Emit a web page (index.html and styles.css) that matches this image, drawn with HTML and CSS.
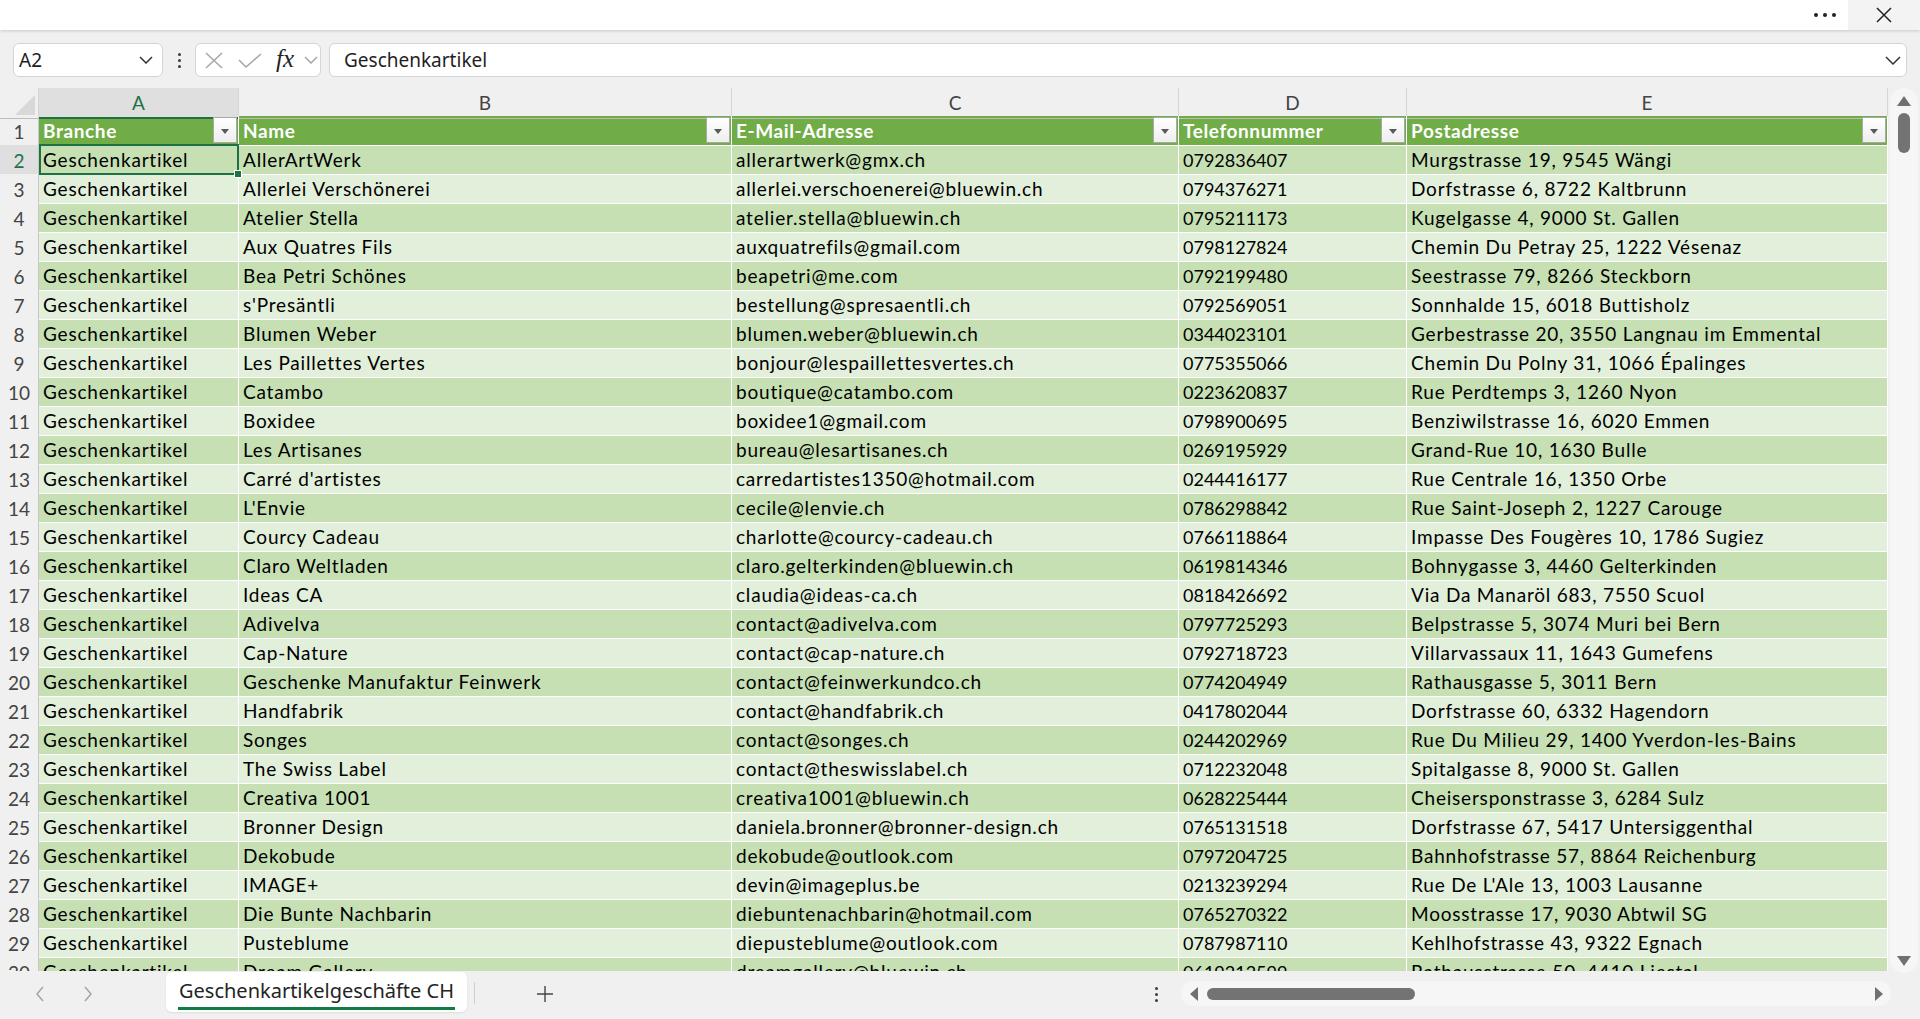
FILE: index.html
```html
<!DOCTYPE html>
<html lang="de">
<head>
<meta charset="utf-8">
<title>Geschenkartikelgeschäfte CH</title>
<link rel="stylesheet" href="styles.css">
</head>
<body>
<div class="app">
  <div class="titlebar">
    <div class="title-more"><span class="dot"></span><span class="dot"></span><span class="dot"></span></div>
    <div class="title-close">
      <svg width="16" height="16" viewBox="0 0 16 16"><path d="M1 1L15 15M15 1L1 15" stroke="#222" stroke-width="1.5" fill="none"/></svg>
    </div>
  </div>

  <div class="formulabar">
    <div class="namebox">
      <span class="nb-text">A2</span>
      <svg class="chev" width="14" height="8" viewBox="0 0 14 8"><path d="M1 1L7 7L13 1" stroke="#333" stroke-width="1.5" fill="none"/></svg>
    </div>
    <div class="fb-dots"><span></span><span></span><span></span></div>
    <div class="fxbox">
      <svg class="fx-x" width="18" height="17" viewBox="0 0 18 17"><path d="M1 1L17 16M17 1L1 16" stroke="#a6a6a6" stroke-width="1.5" fill="none"/></svg>
      <svg class="fx-check" width="24" height="15" viewBox="0 0 24 15"><path d="M1 7L8 14L23 1" stroke="#a6a6a6" stroke-width="1.5" fill="none"/></svg>
      <span class="fx-label">fx</span>
      <svg class="fx-chev" width="14" height="8" viewBox="0 0 14 8"><path d="M1 1L7 7L13 1" stroke="#a6a6a6" stroke-width="1.5" fill="none"/></svg>
    </div>
    <div class="formula">
      <span class="formula-text">Geschenkartikel</span>
      <svg class="chev" width="16" height="9" viewBox="0 0 16 9"><path d="M1 1L8 8L15 1" stroke="#333" stroke-width="1.5" fill="none"/></svg>
    </div>
  </div>

  <div class="main">
    <div class="sheet">
      <div class="colhead">
        <div class="corner"><span class="corner-tri"></span></div>
        <div class="ch sel">A</div>
        <div class="ch">B</div>
        <div class="ch">C</div>
        <div class="ch">D</div>
        <div class="ch">E</div>
      </div>

      <div class="r hd">
        <div class="rh">1</div>
        <div class="c">Branche<span class="fbtn"></span></div>
        <div class="c">Name<span class="fbtn"></span></div>
        <div class="c">E-Mail-Adresse<span class="fbtn"></span></div>
        <div class="c">Telefonnummer<span class="fbtn"></span></div>
        <div class="c">Postadresse<span class="fbtn"></span></div>
      </div>

      <div class="r dk"><div class="rh sel">2</div><div class="c active">Geschenkartikel<span class="selbox"><span class="handle"></span></span></div><div class="c">AllerArtWerk</div><div class="c">allerartwerk@gmx.ch</div><div class="c num">0792836407</div><div class="c">Murgstrasse 19, 9545 Wängi</div></div>
      <div class="r lt"><div class="rh">3</div><div class="c">Geschenkartikel</div><div class="c">Allerlei Verschönerei</div><div class="c">allerlei.verschoenerei@bluewin.ch</div><div class="c num">0794376271</div><div class="c">Dorfstrasse 6, 8722 Kaltbrunn</div></div>
      <div class="r dk"><div class="rh">4</div><div class="c">Geschenkartikel</div><div class="c">Atelier Stella</div><div class="c">atelier.stella@bluewin.ch</div><div class="c num">0795211173</div><div class="c">Kugelgasse 4, 9000 St. Gallen</div></div>
      <div class="r lt"><div class="rh">5</div><div class="c">Geschenkartikel</div><div class="c">Aux Quatres Fils</div><div class="c">auxquatrefils@gmail.com</div><div class="c num">0798127824</div><div class="c">Chemin Du Petray 25, 1222 Vésenaz</div></div>
      <div class="r dk"><div class="rh">6</div><div class="c">Geschenkartikel</div><div class="c">Bea Petri Schönes</div><div class="c">beapetri@me.com</div><div class="c num">0792199480</div><div class="c">Seestrasse 79, 8266 Steckborn</div></div>
      <div class="r lt"><div class="rh">7</div><div class="c">Geschenkartikel</div><div class="c">s'Presäntli</div><div class="c">bestellung@spresaentli.ch</div><div class="c num">0792569051</div><div class="c">Sonnhalde 15, 6018 Buttisholz</div></div>
      <div class="r dk"><div class="rh">8</div><div class="c">Geschenkartikel</div><div class="c">Blumen Weber</div><div class="c">blumen.weber@bluewin.ch</div><div class="c num">0344023101</div><div class="c">Gerbestrasse 20, 3550 Langnau im Emmental</div></div>
      <div class="r lt"><div class="rh">9</div><div class="c">Geschenkartikel</div><div class="c">Les Paillettes Vertes</div><div class="c">bonjour@lespaillettesvertes.ch</div><div class="c num">0775355066</div><div class="c">Chemin Du Polny 31, 1066 Épalinges</div></div>
      <div class="r dk"><div class="rh">10</div><div class="c">Geschenkartikel</div><div class="c">Catambo</div><div class="c">boutique@catambo.com</div><div class="c num">0223620837</div><div class="c">Rue Perdtemps 3, 1260 Nyon</div></div>
      <div class="r lt"><div class="rh">11</div><div class="c">Geschenkartikel</div><div class="c">Boxidee</div><div class="c">boxidee1@gmail.com</div><div class="c num">0798900695</div><div class="c">Benziwilstrasse 16, 6020 Emmen</div></div>
      <div class="r dk"><div class="rh">12</div><div class="c">Geschenkartikel</div><div class="c">Les Artisanes</div><div class="c">bureau@lesartisanes.ch</div><div class="c num">0269195929</div><div class="c">Grand-Rue 10, 1630 Bulle</div></div>
      <div class="r lt"><div class="rh">13</div><div class="c">Geschenkartikel</div><div class="c">Carré d'artistes</div><div class="c">carredartistes1350@hotmail.com</div><div class="c num">0244416177</div><div class="c">Rue Centrale 16, 1350 Orbe</div></div>
      <div class="r dk"><div class="rh">14</div><div class="c">Geschenkartikel</div><div class="c">L'Envie</div><div class="c">cecile@lenvie.ch</div><div class="c num">0786298842</div><div class="c">Rue Saint-Joseph 2, 1227 Carouge</div></div>
      <div class="r lt"><div class="rh">15</div><div class="c">Geschenkartikel</div><div class="c">Courcy Cadeau</div><div class="c">charlotte@courcy-cadeau.ch</div><div class="c num">0766118864</div><div class="c">Impasse Des Fougères 10, 1786 Sugiez</div></div>
      <div class="r dk"><div class="rh">16</div><div class="c">Geschenkartikel</div><div class="c">Claro Weltladen</div><div class="c">claro.gelterkinden@bluewin.ch</div><div class="c num">0619814346</div><div class="c">Bohnygasse 3, 4460 Gelterkinden</div></div>
      <div class="r lt"><div class="rh">17</div><div class="c">Geschenkartikel</div><div class="c">Ideas CA</div><div class="c">claudia@ideas-ca.ch</div><div class="c num">0818426692</div><div class="c">Via Da Manaröl 683, 7550 Scuol</div></div>
      <div class="r dk"><div class="rh">18</div><div class="c">Geschenkartikel</div><div class="c">Adivelva</div><div class="c">contact@adivelva.com</div><div class="c num">0797725293</div><div class="c">Belpstrasse 5, 3074 Muri bei Bern</div></div>
      <div class="r lt"><div class="rh">19</div><div class="c">Geschenkartikel</div><div class="c">Cap-Nature</div><div class="c">contact@cap-nature.ch</div><div class="c num">0792718723</div><div class="c">Villarvassaux 11, 1643 Gumefens</div></div>
      <div class="r dk"><div class="rh">20</div><div class="c">Geschenkartikel</div><div class="c">Geschenke Manufaktur Feinwerk</div><div class="c">contact@feinwerkundco.ch</div><div class="c num">0774204949</div><div class="c">Rathausgasse 5, 3011 Bern</div></div>
      <div class="r lt"><div class="rh">21</div><div class="c">Geschenkartikel</div><div class="c">Handfabrik</div><div class="c">contact@handfabrik.ch</div><div class="c num">0417802044</div><div class="c">Dorfstrasse 60, 6332 Hagendorn</div></div>
      <div class="r dk"><div class="rh">22</div><div class="c">Geschenkartikel</div><div class="c">Songes</div><div class="c">contact@songes.ch</div><div class="c num">0244202969</div><div class="c">Rue Du Milieu 29, 1400 Yverdon-les-Bains</div></div>
      <div class="r lt"><div class="rh">23</div><div class="c">Geschenkartikel</div><div class="c">The Swiss Label</div><div class="c">contact@theswisslabel.ch</div><div class="c num">0712232048</div><div class="c">Spitalgasse 8, 9000 St. Gallen</div></div>
      <div class="r dk"><div class="rh">24</div><div class="c">Geschenkartikel</div><div class="c">Creativa 1001</div><div class="c">creativa1001@bluewin.ch</div><div class="c num">0628225444</div><div class="c">Cheisersponstrasse 3, 6284 Sulz</div></div>
      <div class="r lt"><div class="rh">25</div><div class="c">Geschenkartikel</div><div class="c">Bronner Design</div><div class="c">daniela.bronner@bronner-design.ch</div><div class="c num">0765131518</div><div class="c">Dorfstrasse 67, 5417 Untersiggenthal</div></div>
      <div class="r dk"><div class="rh">26</div><div class="c">Geschenkartikel</div><div class="c">Dekobude</div><div class="c">dekobude@outlook.com</div><div class="c num">0797204725</div><div class="c">Bahnhofstrasse 57, 8864 Reichenburg</div></div>
      <div class="r lt"><div class="rh">27</div><div class="c">Geschenkartikel</div><div class="c">IMAGE+</div><div class="c">devin@imageplus.be</div><div class="c num">0213239294</div><div class="c">Rue De L'Ale 13, 1003 Lausanne</div></div>
      <div class="r dk"><div class="rh">28</div><div class="c">Geschenkartikel</div><div class="c">Die Bunte Nachbarin</div><div class="c">diebuntenachbarin@hotmail.com</div><div class="c num">0765270322</div><div class="c">Moosstrasse 17, 9030 Abtwil SG</div></div>
      <div class="r lt"><div class="rh">29</div><div class="c">Geschenkartikel</div><div class="c">Pusteblume</div><div class="c">diepusteblume@outlook.com</div><div class="c num">0787987110</div><div class="c">Kehlhofstrasse 43, 9322 Egnach</div></div>
      <div class="r dk"><div class="rh">30</div><div class="c">Geschenkartikel</div><div class="c">Dream Gallery</div><div class="c">dreamgallery@bluewin.ch</div><div class="c num">0619212599</div><div class="c">Rathausstrasse 50, 4410 Liestal</div></div>
    </div>

    <div class="vscroll">
      <span class="tri-up"></span>
      <span class="vthumb"></span>
      <span class="vspace"></span>
      <span class="tri-down"></span>
    </div>
  </div>

  <div class="tabbar">
    <div class="nav">
      <svg width="10" height="16" viewBox="0 0 10 16"><path d="M8 1L2 8L8 15" stroke="#a0a0a0" stroke-width="1.4" fill="none"/></svg>
      <svg width="10" height="16" viewBox="0 0 10 16"><path d="M2 1L8 8L2 15" stroke="#a0a0a0" stroke-width="1.4" fill="none"/></svg>
    </div>
    <div class="tab"><span class="tab-label">Geschenkartikelgeschäfte CH</span></div>
    <div class="tab-sep"></div>
    <div class="plus">
      <svg width="18" height="18" viewBox="0 0 18 18"><path d="M9 1V17M1 9H17" stroke="#444" stroke-width="1.4" fill="none"/></svg>
    </div>
    <div class="tab-spacer"></div>
    <div class="tb-dots"><span></span><span></span><span></span></div>
    <div class="hscroll">
      <span class="tri-left"></span>
      <span class="hthumb"></span>
      <span class="hspace"></span>
      <span class="tri-right"></span>
    </div>
  </div>
</div>
</body>
</html>
```

FILE: styles.css
```css
* { box-sizing: border-box; margin: 0; padding: 0; }

html, body {
  width: 1920px;
  height: 1019px;
  overflow: hidden;
  background: #f0f0f0;
}

body {
  font-family: "Noto Sans", "Open Sans", sans-serif;
  color: #242424;
}

.app {
  display: flex;
  flex-direction: column;
  height: 1019px;
}

/* ---------- title bar ---------- */
.titlebar {
  height: 30px;
  flex: 0 0 30px;
  background: #fff;
  display: flex;
  justify-content: flex-end;
  box-shadow: 0 1px 3px rgba(0, 0, 0, 0.16);
  position: relative;
  z-index: 2;
}

.title-more {
  width: 46px;
  display: flex;
  align-items: center;
  justify-content: center;
  gap: 5px;
}

.title-more .dot {
  width: 4px;
  height: 4px;
  border-radius: 50%;
  background: #222;
}

.title-close {
  width: 72px;
  background: #f3f3f3;
  display: flex;
  align-items: center;
  justify-content: center;
}

/* ---------- formula bar ---------- */
.formulabar {
  height: 58px;
  flex: 0 0 58px;
  display: flex;
  align-items: flex-start;
  padding: 13px 13px 0 13px;
}

.namebox {
  width: 150px;
  height: 34px;
  background: #fff;
  border: 1px solid #d4d4d4;
  border-radius: 6px;
  display: flex;
  align-items: center;
  justify-content: space-between;
  padding: 0 9px 0 5px;
  font-size: 19px;
  color: #1f1f1f;
}

.fb-dots {
  width: 32px;
  height: 34px;
  display: flex;
  flex-direction: column;
  align-items: center;
  justify-content: center;
  gap: 3px;
}

.fb-dots span, .tb-dots span {
  width: 3px;
  height: 3px;
  border-radius: 50%;
  background: #3a3a3a;
}

.fxbox {
  width: 126px;
  height: 34px;
  background: #fff;
  border: 1px solid #d4d4d4;
  border-radius: 6px;
  display: flex;
  align-items: center;
  padding-left: 9px;
}

.fx-x { margin-right: 15px; }
.fx-check { margin-right: 14px; }

.fx-label {
  font-family: "Liberation Serif", "DejaVu Serif", serif;
  font-style: italic;
  font-size: 25px;
  color: #222;
  line-height: 1;
  margin-top: -4px;
  margin-right: 10px;
}

.formula {
  flex: 1;
  margin-left: 8px;
  height: 34px;
  background: #fff;
  border: 1px solid #d4d4d4;
  border-radius: 6px;
  display: flex;
  align-items: center;
  justify-content: space-between;
  padding: 0 5px 0 14px;
  font-size: 19px;
  color: #1f1f1f;
}

/* ---------- main grid ---------- */
.main {
  height: 883px;
  flex: 0 0 883px;
  display: flex;
}

.sheet {
  width: 1888px;
  height: 883px;
  overflow: hidden;
  background: #fff;
  font-family: "Lato", "Carlito", sans-serif;
  font-size: 19px;
}

.colhead, .r {
  display: grid;
  grid-template-columns: 39px 200px 493px 447px 228px 481px;
}

.colhead {
  height: 28px;
  background: #f0f0f0;
}

.corner {
  position: relative;
  border-right: 1px solid #d4d4d4;
  border-bottom: 1px solid #bdbdbd;
}

.corner-tri {
  position: absolute;
  right: 3px;
  bottom: 3px;
  width: 0;
  height: 0;
  border-left: 20px solid transparent;
  border-bottom: 20px solid #d8d8d8;
}

.ch {
  text-align: center;
  color: #444;
  line-height: 28px;
  padding-top: 1px;
  border-right: 1px solid #d4d4d4;
  border-bottom: 1px solid #bdbdbd;
}

.ch.sel {
  background: #dfdfdf;
  color: #1e7145;
  border-bottom: 2px solid #1e7145;
}

.r {
  height: 29px;
}

.r.hd { background: #70ad47; }
.r.dk { background: #c6e0b4; }
.r.lt { background: #e2efda; }

.rh {
  background: #f0f0f0;
  color: #444;
  text-align: center;
  line-height: 27px;
  padding-top: 2px;
  border-right: 1px solid #c8c8c8;
  border-bottom: 1px solid #e2e2e2;
}

.rh.sel {
  background: #dfdfdf;
  color: #1e7145;
}

.c {
  position: relative;
  padding: 2px 0 0 4px;
  line-height: 26px;
  letter-spacing: 0.8px;
  white-space: nowrap;
  overflow: hidden;
  color: #000;
  border-right: 1px solid #fff;
  border-bottom: 1px solid #fff;
}

.c.num {
  font-size: 18px;
  letter-spacing: 0;
}

.r.hd .c {
  color: #fff;
  font-weight: 700;
  font-size: 19px;
  letter-spacing: 0.6px;
}

.c.active { overflow: visible; }

.fbtn {
  position: absolute;
  top: 1px;
  right: 1px;
  width: 24px;
  height: 26px;
  border: 1px solid #a9a9a9;
  background: linear-gradient(#ffffff, #eeeeee);
}

.fbtn::after {
  content: "";
  position: absolute;
  left: 7px;
  top: 11px;
  width: 0;
  height: 0;
  border-left: 4.5px solid transparent;
  border-right: 4.5px solid transparent;
  border-top: 5px solid #5a5a5a;
}

.selbox {
  position: absolute;
  left: 0;
  top: -1px;
  right: -1px;
  bottom: -1px;
  border: 2px solid #1e7145;
  z-index: 1;
}

.handle {
  position: absolute;
  right: -5px;
  bottom: -5px;
  width: 8px;
  height: 8px;
  background: #1e7145;
  border: 1px solid #fff;
}

/* ---------- vertical scrollbar ---------- */
.vscroll {
  width: 28px;
  margin-left: 2px;
  height: 885px;
  background: #f6f6f6;
  border-radius: 14px;
  display: flex;
  flex-direction: column;
  align-items: center;
  padding: 8px 0 7px;
}

.tri-up {
  width: 0;
  height: 0;
  border-left: 7px solid transparent;
  border-right: 7px solid transparent;
  border-bottom: 10px solid #707070;
}

.vthumb {
  margin-top: 7px;
  width: 12px;
  height: 40px;
  border-radius: 6px;
  background: #737373;
}

.vspace { flex: 1; }

.tri-down {
  width: 0;
  height: 0;
  border-left: 7px solid transparent;
  border-right: 7px solid transparent;
  border-top: 10px solid #707070;
}

/* ---------- tab bar ---------- */
.tabbar {
  height: 48px;
  flex: 0 0 48px;
  display: flex;
  align-items: flex-start;
  position: relative;
  z-index: 1;
}

.nav {
  width: 166px;
  height: 46px;
  display: flex;
  align-items: center;
  padding-left: 35px;
  gap: 38px;
}

.tab {
  margin-top: 1px;
  width: 301px;
  height: 40px;
  background: #fff;
  border-radius: 6px;
  padding: 0 12px;
  box-shadow: 0 1px 2px rgba(0, 0, 0, 0.08);
}

.tab-label {
  display: block;
  height: 38px;
  line-height: 37px;
  text-align: center;
  font-size: 20px;
  color: #242424;
  border-bottom: 3px solid #107c41;
  white-space: nowrap;
  letter-spacing: 0;
}

.tab-sep {
  margin: 11px 0 0 7px;
  width: 1px;
  height: 22px;
  background: #cfcfcf;
}

.plus {
  margin-left: 52px;
  width: 36px;
  height: 46px;
  display: flex;
  align-items: center;
  justify-content: center;
}

.tab-spacer { flex: 1; }

.tb-dots {
  width: 24px;
  height: 46px;
  display: flex;
  flex-direction: column;
  align-items: center;
  justify-content: center;
  gap: 3px;
  margin-right: 13px;
}

.hscroll {
  margin-top: 10px;
  width: 710px;
  height: 25px;
  margin-right: 29px;
  background: #f6f6f6;
  border-radius: 12px;
  display: flex;
  align-items: center;
  padding: 0 8px 0 9px;
}

.tri-left {
  width: 0;
  height: 0;
  border-top: 7px solid transparent;
  border-bottom: 7px solid transparent;
  border-right: 8px solid #707070;
}

.hthumb {
  margin-left: 9px;
  width: 208px;
  height: 12px;
  border-radius: 6px;
  background: #737373;
}

.hspace { flex: 1; }

.tri-right {
  width: 0;
  height: 0;
  border-top: 7px solid transparent;
  border-bottom: 7px solid transparent;
  border-left: 8px solid #707070;
}
```
